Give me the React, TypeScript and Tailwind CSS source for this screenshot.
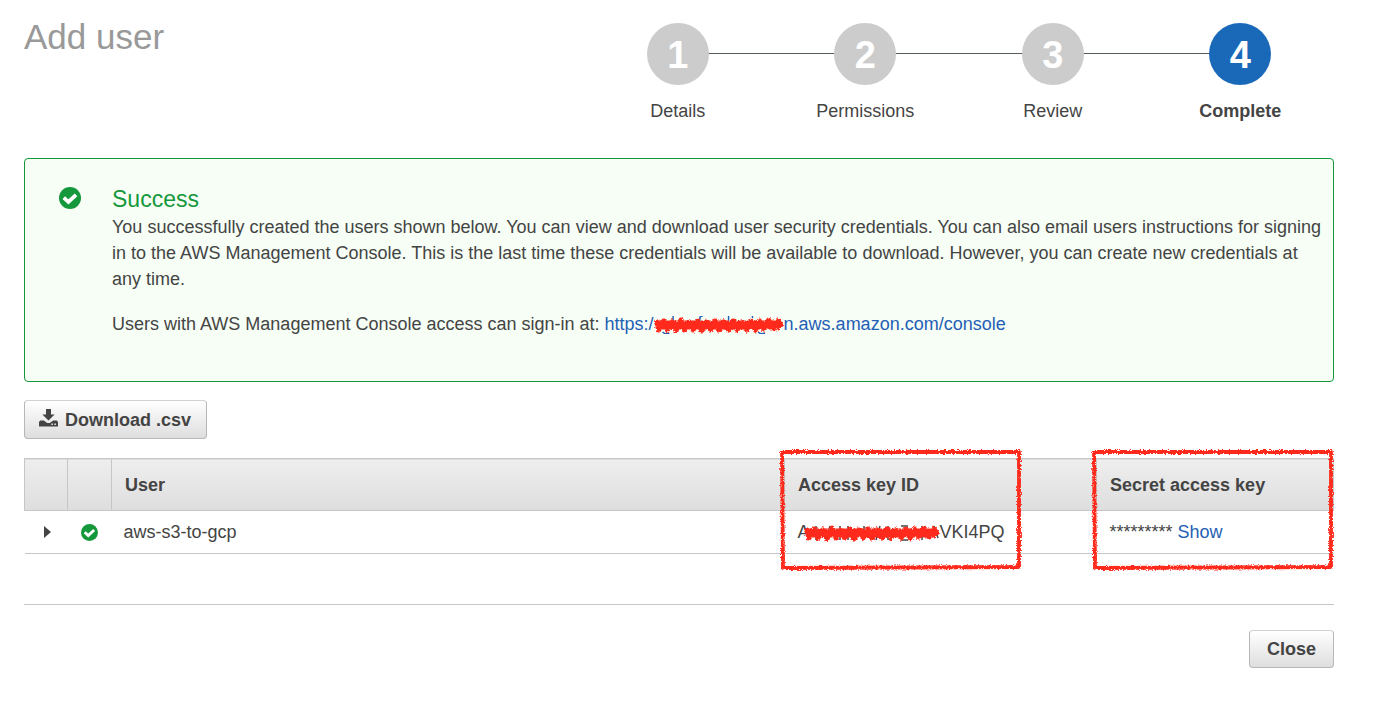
import type { ReactNode } from 'react';

const RED = '#ff2a1a';

function CheckCircle({ className }: { className: string }) {
  return (
    <svg viewBox="0 0 22 22" className={className} aria-hidden="true">
      <circle cx="11" cy="11" r="11" fill="#15983b" />
      <path d="M4.8 10.6 L9.4 15 L17 7.8" fill="none" stroke="#fff" strokeWidth="3.8" />
    </svg>
  );
}

function DownloadIcon() {
  return (
    <svg viewBox="0 0 19 18" className="mb-1 h-[18px] w-[19px]" fill="#444" aria-hidden="true">
      <path d="M7 0h5v5.5h3.6l-6.1 6-6.1-6H7z" />
      <path
        fillRule="evenodd"
        d="M1.2 11.4h3.6l3.4 2.6h2.6l3.4-2.6h3.6l1.2 1.6v4.6H0v-4.6zM12.4 14.6v1.5h1.5v-1.5zM15.4 14.6v1.5h1.5v-1.5z"
      />
    </svg>
  );
}

function MarkerFilter() {
  return (
    <svg className="absolute h-0 w-0" aria-hidden="true">
      <filter id="marker" x="-5%" y="-20%" width="110%" height="140%">
        <feTurbulence type="fractalNoise" baseFrequency="0.6" numOctaves="2" seed="4" />
        <feDisplacementMap in="SourceGraphic" scale="4" xChannelSelector="R" yChannelSelector="G" />
      </filter>
    </svg>
  );
}

function MarkerBox() {
  return (
    <svg
      viewBox="0 0 244 124"
      className="pointer-events-none absolute -top-3 -left-[7px] h-[124px] w-[244px]"
      aria-hidden="true"
    >
      <path
        d="M4 5 L241 5 L241 120 L5 121 L4 4"
        fill="none"
        stroke={RED}
        strokeWidth="3.8"
        strokeLinejoin="round"
        filter="url(#marker)"
      />
    </svg>
  );
}

function Scribble({ className, peek }: { className: string; peek: string }) {
  return (
    <svg viewBox="0 0 136 18" preserveAspectRatio="none" className={className} aria-hidden="true">
      <path d={peek} fill="none" stroke="currentColor" strokeWidth="1.5" />
      <path
        d="M2 4 L5 14 L10 5 L14 14 L19 6 L23 15 L28 4 L32 14 L37 6 L41 14 L46 5 L50 15 L55 6 L59 14 L64 5 L68 14 L73 6 L78 14 L83 5 L87 14 L92 6 L97 14 L102 5 L106 14 L111 5 L115 13 L120 4 L125 13 L130 5 L134 11 M3 7 L133 7 M4 11 L132 11"
        fill="none"
        stroke={RED}
        strokeWidth="5"
        strokeLinejoin="round"
        filter="url(#marker)"
      />
    </svg>
  );
}

function Step({ n, label, first, active }: { n: number; label: string; first?: boolean; active?: boolean }) {
  return (
    <li className="relative flex flex-col items-center" aria-current={active ? 'step' : undefined}>
      {!first && <span className="absolute top-[30px] right-1/2 h-px w-full bg-[#545b5b]" />}
      <span
        className={`relative z-10 flex h-[62px] w-[62px] items-center justify-center rounded-full pt-0.5 text-[38px] leading-none font-bold text-white ${active ? 'bg-[#1a69b9]' : 'bg-[#ccc]'}`}
      >
        {n}
      </span>
      <span className={`mt-[13px] ${active ? 'font-bold' : ''}`}>{label}</span>
    </li>
  );
}

function GreyButton({ children, className }: { children: ReactNode; className: string }) {
  return (
    <button
      type="button"
      className={`flex items-center rounded-[4px] border border-[#b7b7b7] border-t-[#d2d2d2] bg-linear-to-b from-white to-[#dedede] font-bold ${className}`}
    >
      {children}
    </button>
  );
}

export default function App() {
  return (
    <main className="bg-white pt-[23px] pr-[47px] pb-12 pl-6 font-['Liberation_Sans',Arial,sans-serif] text-[18px] leading-[26px] text-[#444]">
      <MarkerFilter />
      <header className="flex items-start justify-between">
        <h1 className="text-[35px] leading-7 text-[#999]">Add user</h1>
        <ol className="grid w-[750px] grid-cols-4">
          <Step n={1} label="Details" first />
          <Step n={2} label="Permissions" />
          <Step n={3} label="Review" />
          <Step n={4} label="Complete" active />
        </ol>
      </header>

      <section className="mt-[34px] flex rounded-[4px] border border-[#15983b] bg-[#f6fef6] pt-7 pr-2 pb-[44px] pl-[34px]">
        <CheckCircle className="mr-[31px] h-[22px] w-[22px] shrink-0" />
        <div>
          <h2 className="mb-[3px] text-[23px] leading-6 text-[#15983b]">Success</h2>
          <p>
            You successfully created the users shown below. You can view and download user security credentials. You can
            also email users instructions for signing in to the AWS Management Console. This is the last time these
            credentials will be available to download. However, you can create new credentials at any time.
          </p>
          <p className="mt-[19px]">
            Users with AWS Management Console access can sign-in at:{' '}
            <a href="#console" className="text-[#1f5fb5]">
              https:/
              <Scribble
                className="inline-block h-[18px] w-[130px]"
                peek="M20 0v5 M48 5v-3q0-2 3-2 M78 0v5 M103 0v2 M9 16q3 3 7 1 M109 16q3 3 7 1"
              />
              n.aws.amazon.com/console
            </a>
          </p>
        </div>
      </section>

      <GreyButton className="mt-[18px] h-[39px] gap-[7px] pr-[15px] pl-[14px]">
        <DownloadIcon />
        Download .csv
      </GreyButton>

      <table className="mt-[19px] w-full table-fixed border-collapse text-left">
        <thead>
          <tr className="h-[52px] border border-[#c6c6c6] bg-linear-to-b from-[#eee] to-[#dedede]">
            <th className="w-[43px] border-r border-[#c6c6c6]" aria-label="Expand" />
            <th className="w-[44px] border-r border-[#c6c6c6]" aria-label="Status" />
            <th className="border-r border-[#c6c6c6] px-[13px]">User</th>
            <th className="relative w-[312px] px-[13px]">
              Access key ID
              <MarkerBox />
            </th>
            <th className="relative w-[237px] border-l border-[#c6c6c6] px-[13px]">
              Secret access key
              <MarkerBox />
            </th>
          </tr>
        </thead>
        <tbody>
          <tr className="h-[43px] border-b border-[#c6c6c6]">
            <td>
              <button type="button" aria-label="Expand row" className="ml-[19px] block">
                <svg viewBox="0 0 7 12" className="h-3 w-[7px]" fill="#444" aria-hidden="true">
                  <path d="M0 0l7 6-7 6z" />
                </svg>
              </button>
            </td>
            <td>
              <CheckCircle className="mx-auto h-[17px] w-[17px]" />
            </td>
            <td className="px-3">aws-s3-to-gcp</td>
            <td className="px-[13px] whitespace-nowrap">
              A
              <Scribble
                className="-ml-1.5 inline-block h-[18px] w-[136px]"
                peek="M12 2v14 M22 16l4-14 M36 2v14 M44 2v14 M60 2v14 M72 16l4-14 M84 2v14 M97 2h7 M97 16h7 M118 2v14 M130 2l4 12"
              />
              VKI4PQ
            </td>
            <td className="px-[13px]">
              *********{' '}
              <a href="#show" className="text-[#1f5fb5]">
                Show
              </a>
            </td>
          </tr>
        </tbody>
      </table>

      <footer className="mt-[50px] flex justify-end border-t border-[#c6c6c6] pt-[25px]">
        <GreyButton className="h-[38px] px-[17px]">Close</GreyButton>
      </footer>
    </main>
  );
}
